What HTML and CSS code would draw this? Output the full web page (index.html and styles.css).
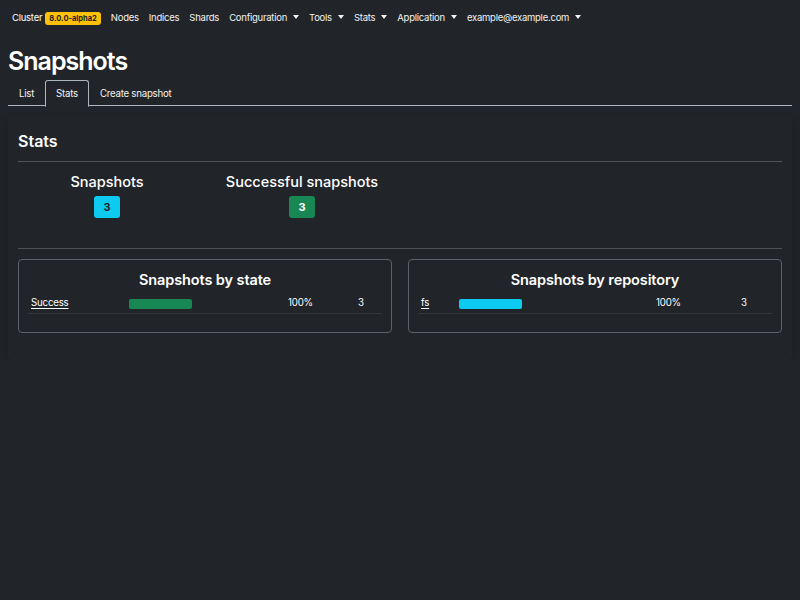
FILE: index.html
```html
<!DOCTYPE html>
<html lang="en">
<head>
<meta charset="utf-8">
<title>Snapshots</title>
<link rel="stylesheet" href="styles.css">
</head>
<body>
<nav class="navbar">
  <a class="brand">Cluster <span class="badge badge-warning">8.0.0-alpha2</span></a>
  <a class="nav-link">Nodes</a>
  <a class="nav-link">Indices</a>
  <a class="nav-link">Shards</a>
  <a class="nav-link dropdown">Configuration</a>
  <a class="nav-link dropdown">Tools</a>
  <a class="nav-link dropdown">Stats</a>
  <a class="nav-link dropdown">Application</a>
  <a class="nav-link dropdown">example@example.com</a>
</nav>
<main class="container">
  <h1 class="title">Snapshots</h1>
  <ul class="tabs">
    <li class="tab">List</li>
    <li class="tab active">Stats</li>
    <li class="tab">Create snapshot</li>
  </ul>
  <section class="card">
    <h3 class="card-title">Stats</h3>
    <hr class="sep">
    <div class="stats">
      <div class="stat stat-1">
        <h5 class="stat-label">Snapshots</h5>
        <span class="badge badge-info">3</span>
      </div>
      <div class="stat stat-2">
        <h5 class="stat-label">Successful snapshots</h5>
        <span class="badge badge-success">3</span>
      </div>
    </div>
    <hr class="sep sep-2">
    <div class="boxes">
      <div class="box">
        <h4 class="box-title">Snapshots by state</h4>
        <div class="row row-state">
          <a class="name">Success</a>
          <div class="bar-cell"><div class="bar bar-success" style="width:63px"></div></div>
          <span class="pct">100%</span>
          <span class="count">3</span>
        </div>
      </div>
      <div class="box">
        <h4 class="box-title">Snapshots by repository</h4>
        <div class="row row-repo">
          <a class="name">fs</a>
          <div class="bar-cell"><div class="bar bar-info" style="width:63px"></div></div>
          <span class="pct">100%</span>
          <span class="count">3</span>
        </div>
      </div>
    </div>
  </section>
</main>
</body>
</html>
```

FILE: styles.css
```css
* { box-sizing: border-box; }
html, body { margin: 0; padding: 0; }
body {
  background: #212529;
  color: #dee2e6;
  font-family: Inter, "Noto Sans", "Liberation Sans", sans-serif;
  font-size: 10px;
  line-height: 1.5;
}
.navbar {
  display: flex;
  align-items: center;
  height: 35px;
  padding: 2px 12px 0;
  font-size: 9.5px;
  letter-spacing: -0.25px;
}
.brand {
  color: #fff;
  margin-right: 5px;
  display: flex;
  align-items: center;
  gap: 3px;
  white-space: nowrap;
}
.nav-link {
  color: #f2f2f2;
  padding: 0 5px;
  white-space: nowrap;
}
.dropdown::after {
  content: "";
  display: inline-block;
  margin-left: 6px;
  vertical-align: 2px;
  border-top: 4px solid #f2f2f2;
  border-left: 3.5px solid transparent;
  border-right: 3.5px solid transparent;
}
.badge {
  display: inline-block;
  font-weight: 700;
  border-radius: 3px;
  line-height: 1;
  text-align: center;
  letter-spacing: 0;
}
.badge-warning {
  background: #ffc107;
  color: #212529;
  font-size: 7.5px;
  padding: 3px 4px;
}
.container {
  padding: 0 8px;
}
.title {
  margin: 11px 0 0;
  font-size: 25px;
  font-weight: 600;
  letter-spacing: -1px;
  line-height: 1.2;
  color: #fff;
  height: 34px;
}
.tabs {
  list-style: none;
  margin: 0;
  padding: 0;
  display: flex;
  border-bottom: 1px solid #adb5bd;
  height: 26px;
  letter-spacing: -0.25px;
  font-size: 9.7px;
}
.tab {
  padding: 0 10px;
  line-height: 25px;
  border: 1px solid transparent;
  border-top-left-radius: 3px;
  border-top-right-radius: 3px;
  color: #f2f2f2;
}
.tab.active {
  border-color: #adb5bd #adb5bd #212529;
  margin-bottom: -1px;
  background: #212529;
  height: 27px;
}
.card {
  margin-top: 11px;
  padding: 13px 10px 27px;
  box-shadow: 0 4px 10px rgba(0, 0, 0, 0.22);
  border-radius: 4px;
}
.card-title {
  margin: 0;
  font-size: 16px;
  font-weight: 600;
  line-height: 1.2;
  color: #fff;
  height: 22px;
  padding-top: 2px;
}
.sep {
  border: 0;
  border-top: 1px solid #4d5257;
  margin: 9px 0 0;
}
.sep-2 { margin-top: 0; }
.stats {
  display: grid;
  grid-template-columns: 178px 212px;
  height: 86px;
  padding-top: 10px;
}
.stat {
  display: flex;
  flex-direction: column;
  align-items: center;
}
.stat-label {
  margin: 0;
  font-size: 14.5px;
  font-weight: 500;
  line-height: 20px;
  color: #fff;
}
.stat .badge {
  margin-top: 4px;
  font-size: 11px;
  width: 26px;
  height: 22px;
  line-height: 22px;
}
.badge-info { background: #0dcaf0; color: #212529; }
.badge-success { background: #198754; color: #fff; }
.boxes {
  display: grid;
  grid-template-columns: 1fr 1fr;
  gap: 16px;
  margin-top: 10px;
}
.box {
  border: 1px solid #5c6167;
  border-radius: 4px;
  padding: 10px 9px 19px;
  height: 74px;
}
.box-title {
  margin: 0;
  text-align: center;
  font-size: 14.5px;
  font-weight: 600;
  letter-spacing: -0.1px;
  line-height: 20px;
  color: #fff;
}
.row {
  display: grid;
  align-items: center;
  height: 24px;
  padding-top: 4px;
  border-bottom: 1px solid #33373c;
  color: #fff;
  font-size: 9.7px;
  letter-spacing: -0.2px;
}
.row > * { padding-left: 3px; }
.row-state { grid-template-columns: 98px 159px 70px 1fr; }
.row-repo { grid-template-columns: 38px 197px 85px 1fr; }
.name {
  color: #fff;
  text-decoration: underline;
  text-underline-offset: 2px;
}
.bar-cell { display: flex; }
.bar {
  height: 10px;
  border-radius: 2px;
}
.bar-success { background: #198754; }
.bar-info { background: #0dcaf0; }
```
